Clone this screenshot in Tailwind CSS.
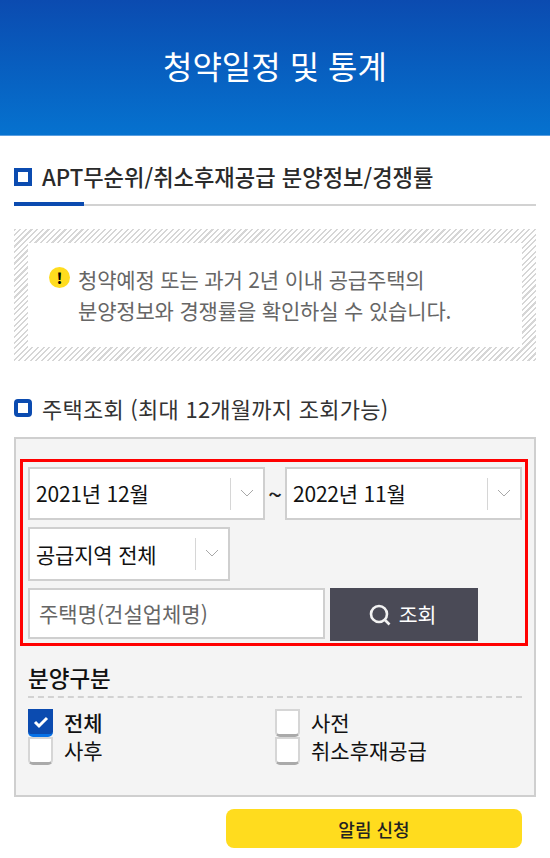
<!DOCTYPE html>
<html lang="ko">
  <head>
    <meta charset="UTF-8" />
    <meta name="viewport" content="width=device-width, initial-scale=1.0" />
    <script src="https://cdn.jsdelivr.net/npm/@tailwindcss/browser@4"></script>
    <title>청약일정 및 통계</title>
  </head>
  <body class="bg-white font-['Noto_Sans_CJK_KR','Noto_Sans',sans-serif] text-[#222] overflow-hidden">
    <header class="h-[136px] pb-[5px] flex items-center justify-center bg-gradient-to-b from-[#0b4bb0] to-[#0672cf] border-b border-[#5a9ee0]">
      <h1 class="text-[32px] leading-none text-white">청약일정 및 통계</h1>
    </header>

    <main class="px-[14px]">
      <!-- title -->
      <div class="relative h-[70px] border-b-2 border-[#d2d2d2] flex items-center gap-[10px] pt-[13px] mb-[23px]">
        <span class="w-[18px] h-[18px] border-[4px] border-[#0b4bb0] bg-white"></span>
        <h2 class="text-[22.2px] font-medium leading-none text-[#2a2a2a]">APT무순위/취소후재공급 분양정보/경쟁률</h2>
        <span class="absolute left-0 -bottom-[2px] w-[70px] h-[4px] bg-[#0b4bb0]"></span>
      </div>

      <!-- notice -->
      <div class="p-[14px] h-[132px] bg-[repeating-linear-gradient(135deg,#d6d6d6_0,#d6d6d6_1.5px,#fff_1.5px,#fff_4px)]">
        <div class="h-full bg-white flex items-start pl-[21px] pt-[21px] gap-[8px]">
          <span class="w-[21px] h-[21px] mt-[3px] rounded-full bg-[#ffdc1e] flex items-center justify-center text-[15px] font-black leading-none text-black">!</span>
          <p class="text-[21px] leading-[31px] tracking-[-0.17px] text-[#666]">청약예정 또는 과거 2년 이내 공급주택의<br />분양정보와 경쟁률을 확인하실 수 있습니다.</p>
        </div>
      </div>

      <!-- search -->
      <div class="flex items-center gap-[10px] h-[30px] mt-[32px] mb-[14px]">
        <span class="w-[18px] h-[18px] rounded-[4px] border-[4px] border-[#0b4bb0] bg-white"></span>
        <h3 class="text-[22px] leading-none text-[#333] tracking-[0.25px]">주택조회 (최대 12개월까지 조회가능)</h3>
      </div>

      <section class="h-[360px] border-2 border-[#cfcfcf] bg-[#f4f4f4] px-[4px] pt-[20px]">
        <div class="w-[508px] h-[187px] border-[3px] border-[#f00] px-[5px] pt-[5px]">
          <div class="flex items-center">
            <div class="shrink-0 w-[237px] h-[53px] border-2 border-[#cfcfcf] bg-white flex items-center">
              <span class="flex-1 pl-[6px] text-[21px] leading-none text-[#111] tracking-[-0.2px]">2021년 12월</span>
              <span class="w-px h-[32px] bg-[#d6d6d6]"></span>
              <svg class="w-[32px] h-[12px]" viewBox="0 0 32 12" fill="none" stroke="#a8a8a8" stroke-width="1"><path d="M10 2l6 6 6-6"></path></svg>
            </div>
            <span class="shrink-0 w-[20px] text-center text-[24px] leading-none font-medium">~</span>
            <div class="shrink-0 w-[237px] h-[53px] border-2 border-[#cfcfcf] bg-white flex items-center">
              <span class="flex-1 pl-[6px] text-[21px] leading-none text-[#111] tracking-[-0.2px]">2022년 11월</span>
              <span class="w-px h-[32px] bg-[#d6d6d6]"></span>
              <svg class="w-[32px] h-[12px]" viewBox="0 0 32 12" fill="none" stroke="#a8a8a8" stroke-width="1"><path d="M10 2l6 6 6-6"></path></svg>
            </div>
          </div>
          <div class="w-[202px] h-[54px] mt-[7px] border-2 border-[#cfcfcf] bg-white flex items-center">
            <span class="flex-1 pl-[6px] text-[21px] leading-none text-[#111] tracking-[-0.2px]">공급지역 전체</span>
            <span class="w-px h-[32px] bg-[#d6d6d6]"></span>
            <svg class="w-[32px] h-[12px]" viewBox="0 0 32 12" fill="none" stroke="#a8a8a8" stroke-width="1"><path d="M10 2l6 6 6-6"></path></svg>
          </div>
          <div class="flex items-start mt-[7px] gap-[5px]">
            <div class="w-[297px] h-[51px] border-2 border-[#cfcfcf] bg-white flex items-center pl-[9px] text-[21px] leading-none text-[#666]">주택명(건설업체명)</div>
            <button class="w-[148px] h-[53px] bg-[#4a4a56] flex items-center justify-center gap-[8px] text-[20.5px] leading-none text-white pr-[3px]">
              <svg class="w-[22px] h-[22px]" viewBox="0 0 22 22" fill="none" stroke="#f2f2f2" stroke-width="2.6"><circle cx="10" cy="10" r="8"></circle><path d="M15.5 15.5l5 5"></path></svg>
              조회
            </button>
          </div>
        </div>

        <div class="mx-[8px] mt-[16px] pb-[4px] h-[36px] border-b-2 border-dashed border-[#d2d2d2] flex items-center text-[22.5px] font-medium leading-none text-[#111]">분양구분</div>
        <div class="mx-[8px] mt-[11px] grid grid-cols-[247px_1fr] text-[21px] leading-[28px] text-[#111]">
          <label class="flex items-center h-[28px] gap-[11px] font-medium">
            <span class="w-[25px] h-[28px] rounded-b-[5px] bg-[#0b4bb0] border-b-[3px] border-[#0672e8] flex items-center justify-center">
              <svg class="w-[16px] h-[14px]" viewBox="0 0 16 14" fill="none" stroke="#fff" stroke-width="3"><path d="M2 7l4 4 8-8"></path></svg>
            </span>
            <span class="pb-[2px]">전체</span>
          </label>
          <label class="flex items-center h-[28px] gap-[11px]">
            <span class="w-[25px] h-[28px] rounded-b-[5px] bg-white border-2 border-[#d6d6d6] border-b-[3px] border-b-[#aaa]"></span>
            <span class="pb-[2px]">사전</span>
          </label>
          <label class="flex items-center h-[28px] gap-[11px]">
            <span class="w-[25px] h-[28px] rounded-b-[5px] bg-white border-2 border-[#d6d6d6] border-b-[3px] border-b-[#aaa]"></span>
            <span class="pb-[2px]">사후</span>
          </label>
          <label class="flex items-center h-[28px] gap-[11px]">
            <span class="w-[25px] h-[28px] rounded-b-[5px] bg-white border-2 border-[#d6d6d6] border-b-[3px] border-b-[#aaa]"></span>
            <span class="pb-[2px]">취소후재공급</span>
          </label>
        </div>
      </section>

      <div class="flex justify-end pr-[14px] mt-[12px]">
        <button class="w-[296px] h-[39px] rounded-[8px] bg-[#ffdc1e] text-[18px] font-medium leading-none text-[#222]">알림 신청</button>
      </div>
    </main>
  </body>
</html>
